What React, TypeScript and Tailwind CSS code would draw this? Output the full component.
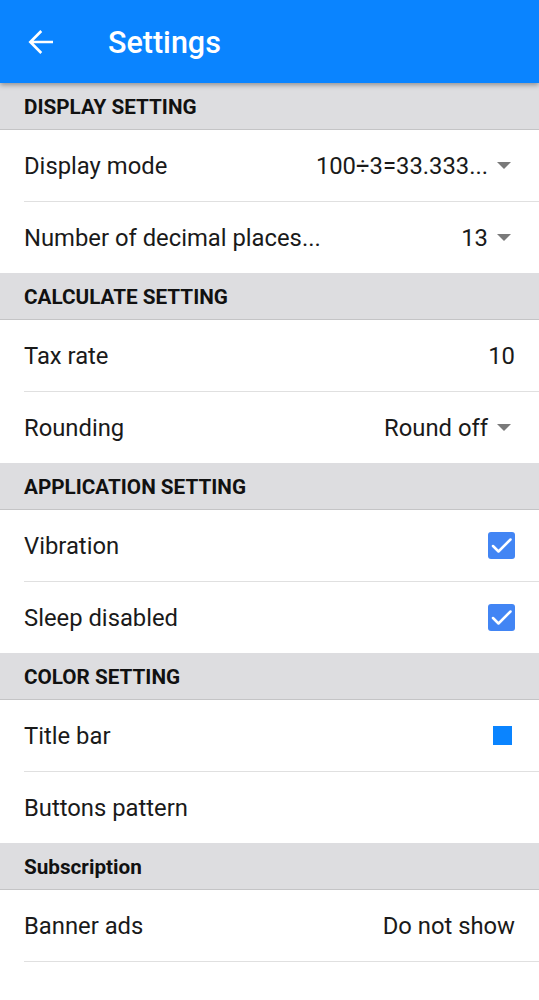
import React from "react";

const Caret = () => (
  <svg width="14" height="8" viewBox="0 0 14 8" className="ml-[9px] mr-[4px]">
    <path d="M0 0 L14 0 L7 7 Z" fill="#7a7a7a" />
  </svg>
);

const Check = () => (
  <div className="w-[27px] h-[27px] rounded-[3px] bg-[#4285f4]">
    <svg width="27" height="27" viewBox="0 0 27 27">
      <path d="M5 14 L10.5 19.5 L22.5 7.5" stroke="white" strokeWidth="2.5" fill="none" strokeLinecap="round" strokeLinejoin="round" />
    </svg>
  </div>
);

const Section = ({ title }: { title: string }) => (
  <div className="h-[47px] bg-[#dddde0] border-b border-[#c4c4c6] flex items-center px-6 pt-[3px]">
    <span className="text-[20.7px] font-bold text-[#111]">{title}</span>
  </div>
);

const Row = ({
  label,
  right,
  line = true,
}: {
  label: string;
  right?: React.ReactNode;
  line?: boolean;
}) => (
  <div className="pl-6">
    <div className={`flex items-center justify-between pr-6 ${line ? "h-[72px] border-b border-[#e0e0e0]" : "h-[71px]"}`}>
      <span className="text-[23.8px] text-[#1a1a1a] pt-[3px]">{label}</span>
      {right}
    </div>
  </div>
);

const Val = ({ children }: { children: React.ReactNode }) => (
  <span className="text-[23.8px] text-[#1a1a1a] pt-[3px]">{children}</span>
);

export default function App() {
  return (
    <div className="w-[539px] h-[1000px] bg-white overflow-hidden" style={{ fontFamily: "Roboto, 'Noto Sans', sans-serif" }}>
      <div className="relative z-10 h-[83px] bg-[#0a84ff] flex items-center shadow-[0_2px_5px_rgba(0,0,0,0.35)]">
        <svg width="32" height="32" viewBox="0 0 24 24" className="ml-[25px]">
          <path d="M20 12 H4.5 M11.5 4.5 L4 12 L11.5 19.5" stroke="white" strokeWidth="2" fill="none" strokeLinecap="square" />
        </svg>
        <span className="ml-[51px] text-[30.5px] font-medium text-white pt-[2px]">Settings</span>
      </div>
      <Section title="DISPLAY SETTING" />
      <Row label="Display mode" right={<div className="flex items-center"><Val>100÷3=33.333...</Val><Caret /></div>} />
      <Row label="Number of decimal places..." line={false} right={<div className="flex items-center"><Val>13</Val><Caret /></div>} />
      <Section title="CALCULATE SETTING" />
      <Row label="Tax rate" right={<Val>10</Val>} />
      <Row label="Rounding" line={false} right={<div className="flex items-center"><Val>Round off</Val><Caret /></div>} />
      <Section title="APPLICATION SETTING" />
      <Row label="Vibration" right={<Check />} />
      <Row label="Sleep disabled" line={false} right={<Check />} />
      <Section title="COLOR SETTING" />
      <Row label="Title bar" right={<div className="w-[19px] h-[19px] bg-[#0a84ff] mr-[3px]" />} />
      <Row label="Buttons pattern" line={false} />
      <Section title="Subscription" />
      <Row label="Banner ads" right={<Val>Do not show</Val>} />
    </div>
  );
}
